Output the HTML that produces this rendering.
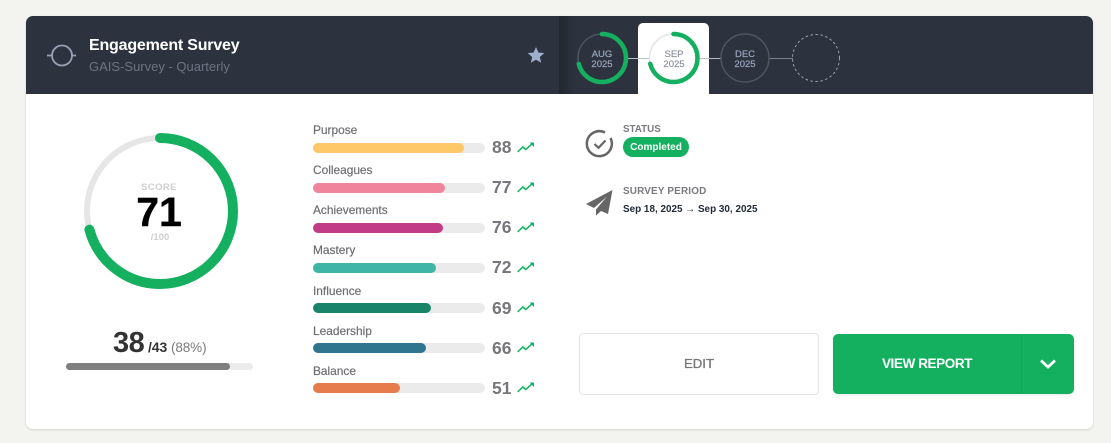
<!DOCTYPE html>
<html><head><meta charset="utf-8">
<style>
html,body{margin:0;padding:0;width:1111px;height:443px;overflow:hidden;background:#f3f3ef;font-family:"Liberation Sans",sans-serif}
.a{position:absolute;white-space:nowrap}
.card{position:absolute;left:26px;top:16px;width:1067px;height:413px;background:#fff;border-radius:7px;box-shadow:0 1px 2px rgba(0,0,0,.14)}
.lab{font-size:11.900px;color:#6e6e73;left:313px;line-height:14px;-webkit-text-stroke:.2px #6e6e73}
.tr{left:313px;width:172px;height:10px;border-radius:5px;background:#ebebeb}
.fl{position:absolute;left:0;top:0;height:10px;border-radius:5px}
.num{left:492px;font-size:17.5px;font-weight:bold;color:#77777b;line-height:20px}
.up{position:absolute;left:517px}
.yr{position:absolute;top:49.500px;width:40px;text-align:center;font-size:9.500px;line-height:10px;color:#9aa5bb;-webkit-text-stroke:.2px #9aa5bb}
</style></head><body>
<div class="card"></div>
<div class="a" style="left:26px;top:16px;width:1067px;height:78px;background:#2c333e;border-radius:7px 7px 0 0"></div>
<div class="a" style="left:559px;top:16px;width:16px;height:78px;background:linear-gradient(90deg,#21272f,#2c333e)"></div>

<svg class="a" style="left:46px;top:41px" width="32" height="30" viewBox="0 0 32 30" fill="none" stroke="#98a2b5" stroke-width="1.800"><circle cx="16" cy="14.500" r="10"/><path d="M1 14.500H6M26 14.500h4"/></svg>
<div class="a" style="left:89px;top:36px;font-size:16px;font-weight:bold;color:#fff;line-height:19px;letter-spacing:-.2px">Engagement Survey</div>
<div class="a" style="left:89px;top:59px;font-size:13px;color:#6c7482;line-height:16px">GAIS-Survey - Quarterly</div>
<svg class="a" style="left:527px;top:46px" width="18" height="18" viewBox="0 0 24 24"><path fill="#9fb0cf" d="M12 1.500l3.200 7.200 7.800.8-5.900 5.200 1.800 7.700L12 18.400l-6.900 4 1.800-7.700L1 9.500l7.800-.8z"/></svg>

<div class="a" style="left:638px;top:23px;width:71px;height:71px;background:#fff;border-radius:5px 5px 0 0"></div>
<svg class="a" style="left:559px;top:16px" width="300" height="78" viewBox="559 16 300 78" fill="none">
<path d="M627 58.500h22" stroke="#b9bec9" stroke-width="1"/>
<path d="M698 58.500h23" stroke="#b9bec9" stroke-width="1"/>
<path d="M769 58.500h24" stroke="#7c828e" stroke-width="1"/>
<circle cx="602" cy="58" r="24" stroke="#4e5560" stroke-width="1.500"/>
<circle cx="602" cy="58" r="24" stroke="#15b05f" stroke-width="4.500" stroke-linecap="round" stroke-dasharray="107 151" transform="rotate(-90 602 58)"/>
<circle cx="673.500" cy="58" r="24" stroke="#e4e4e4" stroke-width="1.500"/>
<circle cx="673.500" cy="58" r="24" stroke="#15b05f" stroke-width="4.500" stroke-linecap="round" stroke-dasharray="107 151" transform="rotate(-90 673.500 58)"/>
<circle cx="745" cy="58" r="24" stroke="#4e5560" stroke-width="1.500"/>
<circle cx="816" cy="58" r="23.500" stroke="#9ba1ab" stroke-width="1" stroke-dasharray="2.500 2.500"/>
</svg>
<div class="yr" style="left:582px">AUG<br>2025</div>
<div class="yr" style="left:654px;color:#8d93a0;-webkit-text-stroke:.2px #8d93a0">SEP<br>2025</div>
<div class="yr" style="left:725px">DEC<br>2025</div>

<svg class="a" style="left:76px;top:126px" width="170" height="170" viewBox="0 0 170 170" fill="none">
<circle cx="84" cy="85" r="73" stroke="#e6e6e6" stroke-width="6"/>
<circle cx="84" cy="85" r="73" stroke="#15b05f" stroke-width="10" stroke-linecap="round" stroke-dasharray="325 459" transform="rotate(-90 84 85)"/>
</svg>
<div class="a" style="left:120px;top:181.500px;width:78px;text-align:center;font-size:9.500px;font-weight:bold;color:#cfcfcf;letter-spacing:.4px;line-height:12px">SCORE</div>
<div class="a" style="left:120px;top:189px;width:78px;text-align:center;font-size:41px;font-weight:bold;color:#000;line-height:46px;-webkit-text-stroke:.4px #000">71</div>
<div class="a" style="left:120px;top:231.500px;width:80px;text-align:center;font-size:9.500px;font-weight:bold;color:#cfcfcf;line-height:12px">/100</div>

<div class="a" style="left:113px;top:326px;font-size:29px;font-weight:bold;color:#333;line-height:34px;letter-spacing:-.5px">38</div>
<div class="a" style="left:148px;top:339px;font-size:14px;font-weight:bold;color:#333;line-height:17px;letter-spacing:-.1px">/43 <span style="font-weight:normal;color:#7a7a7a;font-size:13.500px">(88%)</span></div>
<div class="a" style="left:66px;top:363px;width:187px;height:7px;border-radius:4px;background:#ebebeb"><div style="width:164px;height:7px;border-radius:4px;background:#7f7f7f"></div></div>

<div class="a lab" style="top:123px">Purpose</div>
<div class="a tr" style="top:143px"><div class="fl" style="width:151px;background:#fec868"></div></div>
<div class="a num" style="top:137px">88</div>
<div class="a lab" style="top:163px">Colleagues</div>
<div class="a tr" style="top:183px"><div class="fl" style="width:132px;background:#f0849b"></div></div>
<div class="a num" style="top:177px">77</div>
<div class="a lab" style="top:203px">Achievements</div>
<div class="a tr" style="top:223px"><div class="fl" style="width:130px;background:#c23b87"></div></div>
<div class="a num" style="top:217px">76</div>
<div class="a lab" style="top:243px">Mastery</div>
<div class="a tr" style="top:263px"><div class="fl" style="width:123px;background:#3fb5a7"></div></div>
<div class="a num" style="top:257px">72</div>
<div class="a lab" style="top:284px">Influence</div>
<div class="a tr" style="top:303px"><div class="fl" style="width:118px;background:#18856a"></div></div>
<div class="a num" style="top:298px">69</div>
<div class="a lab" style="top:324px">Leadership</div>
<div class="a tr" style="top:343px"><div class="fl" style="width:113px;background:#2f7590"></div></div>
<div class="a num" style="top:338px">66</div>
<div class="a lab" style="top:364px">Balance</div>
<div class="a tr" style="top:383px"><div class="fl" style="width:87px;background:#e67b4b"></div></div>
<div class="a num" style="top:378px">51</div>

<svg class="up" style="top:141px" width="18" height="13" viewBox="0 0 18 13" fill="none"><path stroke="#15b05f" stroke-width="1.500" d="M.7 11l5-5 3 2.500L15 3"/><path fill="#15b070" d="M12.500 1.500H17V6z"/></svg>
<svg class="up" style="top:181px" width="18" height="13" viewBox="0 0 18 13" fill="none"><path stroke="#15b05f" stroke-width="1.500" d="M.7 11l5-5 3 2.500L15 3"/><path fill="#15b070" d="M12.500 1.500H17V6z"/></svg>
<svg class="up" style="top:221px" width="18" height="13" viewBox="0 0 18 13" fill="none"><path stroke="#15b05f" stroke-width="1.500" d="M.7 11l5-5 3 2.500L15 3"/><path fill="#15b070" d="M12.500 1.500H17V6z"/></svg>
<svg class="up" style="top:261px" width="18" height="13" viewBox="0 0 18 13" fill="none"><path stroke="#15b05f" stroke-width="1.500" d="M.7 11l5-5 3 2.500L15 3"/><path fill="#15b070" d="M12.500 1.500H17V6z"/></svg>
<svg class="up" style="top:301px" width="18" height="13" viewBox="0 0 18 13" fill="none"><path stroke="#15b05f" stroke-width="1.500" d="M.7 11l5-5 3 2.500L15 3"/><path fill="#15b070" d="M12.500 1.500H17V6z"/></svg>
<svg class="up" style="top:341px" width="18" height="13" viewBox="0 0 18 13" fill="none"><path stroke="#15b05f" stroke-width="1.500" d="M.7 11l5-5 3 2.500L15 3"/><path fill="#15b070" d="M12.500 1.500H17V6z"/></svg>
<svg class="up" style="top:381px" width="18" height="13" viewBox="0 0 18 13" fill="none"><path stroke="#15b05f" stroke-width="1.500" d="M.7 11l5-5 3 2.500L15 3"/><path fill="#15b070" d="M12.500 1.500H17V6z"/></svg>

<svg class="a" style="left:584.500px;top:129px" width="30" height="30" viewBox="0 0 30 30" fill="none" stroke="#666" stroke-width="2.500"><path d="M25.500 9A12.500 12.500 0 1 1 20 3.500"/><path d="M9.500 15l4 3.800 7-7.300" stroke-width="2.200"/></svg>
<div class="a" style="left:623px;top:124px;font-size:9.800px;font-weight:bold;color:#7a7a7f;line-height:12px">STATUS</div>
<div class="a" style="left:623px;top:137px;width:66px;height:20px;border-radius:10px;background:#15b05f;color:#fff;font-size:10px;font-weight:bold;line-height:21px;text-align:center">Completed</div>
<svg class="a" style="left:585px;top:189px" width="29" height="28" viewBox="585 189 29 28"><path fill="#666" d="M612.500 190L586 204l8 4 13-11.500-11 13V215.500l5-4.500 7 3z"/></svg>
<div class="a" style="left:623px;top:186px;font-size:9.900px;font-weight:bold;color:#7a7a7f;line-height:12px;letter-spacing:.2px">SURVEY PERIOD</div>
<div class="a" style="left:623px;top:203px;font-size:9.900px;font-weight:bold;color:#222b38;line-height:13px;letter-spacing:.02px">Sep 18, 2025 → Sep 30, 2025</div>

<div class="a" style="left:579px;top:333px;width:238px;height:60px;border:1px solid #e3e3e3;border-radius:4px;text-align:center;line-height:60px;font-size:13.200px;color:#777;background:#fff;-webkit-text-stroke:.3px #777">EDIT</div>
<div class="a" style="left:833px;top:334px;width:241px;height:60px;border-radius:5px;background:#15b05f;box-shadow:0 1px 3px rgba(0,0,0,.1)"></div>
<div class="a" style="left:1021px;top:334px;width:1px;height:60px;background:#14a558"></div>
<div class="a" style="left:833px;top:334px;width:188px;text-align:center;line-height:60px;font-size:13.500px;font-weight:bold;color:#fff;letter-spacing:-.4px">VIEW REPORT</div>
<svg class="a" style="left:1039px;top:358px" width="18" height="12" viewBox="0 0 18 12" fill="none" stroke="#fff" stroke-width="2.800"><path d="M2 2.500l7 6.500 7-6.500"/></svg>
</body></html>
